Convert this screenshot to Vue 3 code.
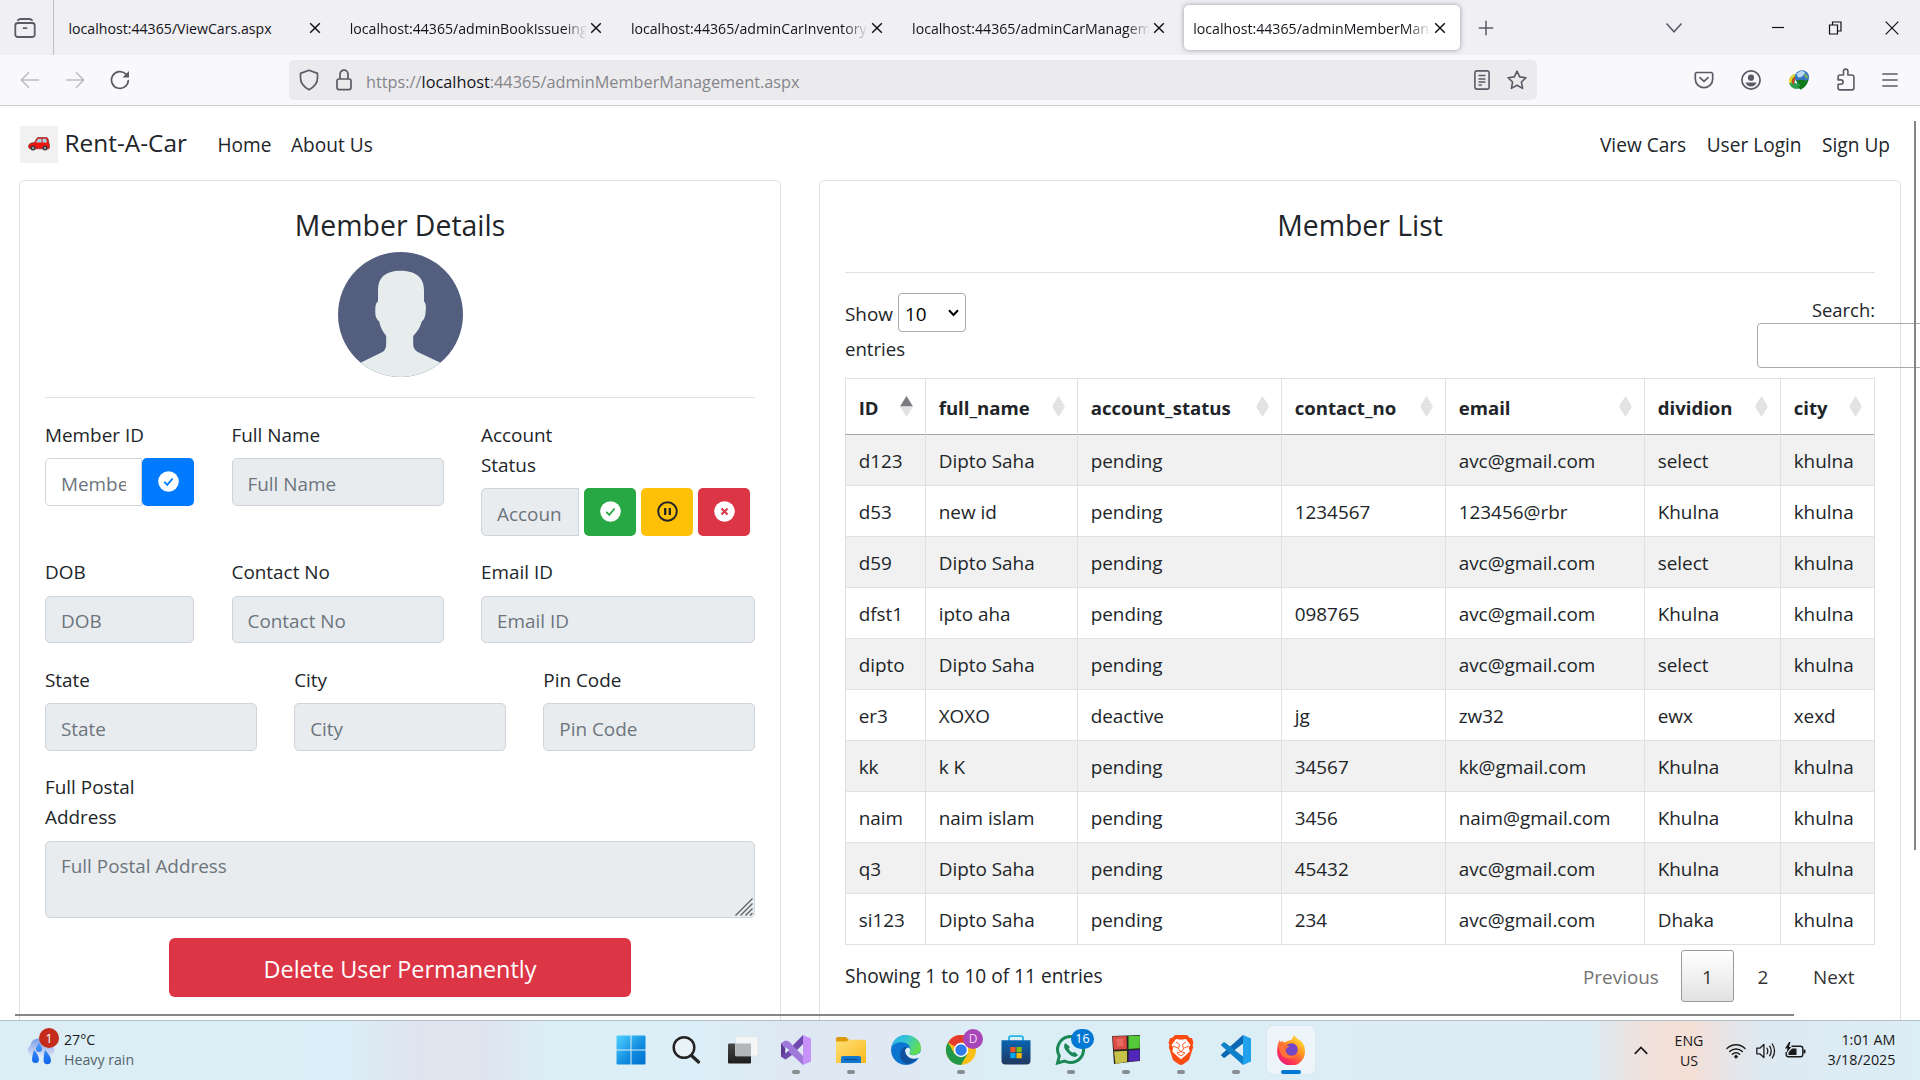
<script setup>
const tabs = [
  { title: 'localhost:44365/ViewCars.aspx' },
  { title: 'localhost:44365/adminBookIssueing.aspx' },
  { title: 'localhost:44365/adminCarInventory.aspx' },
  { title: 'localhost:44365/adminCarManagement.aspx' },
  { title: 'localhost:44365/adminMemberManagement.aspx', active: true },
]

const columns = [
  { label: 'ID', width: 80, sorted: true },
  { label: 'full_name', width: 152 },
  { label: 'account_status', width: 204 },
  { label: 'contact_no', width: 164 },
  { label: 'email', width: 199 },
  { label: 'dividion', width: 136 },
  { label: 'city', width: 94 },
]

const members = [
  ['d123', 'Dipto Saha', 'pending', '', 'avc@gmail.com', 'select', 'khulna'],
  ['d53', 'new id', 'pending', '1234567', '123456@rbr', 'Khulna', 'khulna'],
  ['d59', 'Dipto Saha', 'pending', '', 'avc@gmail.com', 'select', 'khulna'],
  ['dfst1', 'ipto aha', 'pending', '098765', 'avc@gmail.com', 'Khulna', 'khulna'],
  ['dipto', 'Dipto Saha', 'pending', '', 'avc@gmail.com', 'select', 'khulna'],
  ['er3', 'XOXO', 'deactive', 'jg', 'zw32', 'ewx', 'xexd'],
  ['kk', 'k K', 'pending', '34567', 'kk@gmail.com', 'Khulna', 'khulna'],
  ['naim', 'naim islam', 'pending', '3456', 'naim@gmail.com', 'Khulna', 'khulna'],
  ['q3', 'Dipto Saha', 'pending', '45432', 'avc@gmail.com', 'Khulna', 'khulna'],
  ['si123', 'Dipto Saha', 'pending', '234', 'avc@gmail.com', 'Dhaka', 'khulna'],
]
</script>

<template>
  <div class="screen">
    <!-- Tab strip -->
    <div class="tabstrip">
      <div class="recent">
        <svg width="22" height="20" viewBox="0 0 22 20" fill="none" stroke="#5b5b66" stroke-width="1.8" stroke-linecap="round">
          <path d="M4 2.200Q4.800 1 6.500 1h9q1.700 0 2.500 1.200" /><rect x="1.300" y="5" width="19.400" height="14" rx="2.400" /><path d="M9.500 10.200h3" />
        </svg>
      </div>
      <div v-for="tab in tabs" :key="tab.title" class="tab" :class="{ active: tab.active }">
        <span class="tab-title">{{ tab.title }}</span>
        <svg class="tab-close" width="12" height="12" viewBox="0 0 12 12" stroke="#15141a" stroke-width="1.5"><path d="M1.2 1.2l9.6 9.6M10.8 1.2l-9.6 9.6" /></svg>
      </div>
      <svg class="plus" width="16" height="16" viewBox="0 0 16 16" stroke="#5b5b66" stroke-width="1.5"><path d="M8 .8v14.4M.8 8h14.4" /></svg>
      <div class="window-controls">
        <svg width="18" height="12" viewBox="0 0 18 12" fill="none" stroke="#5b5b66" stroke-width="1.6"><path d="M1.5 1.5L9 9.7l7.5-8.2" /></svg>
        <svg width="14" height="14" viewBox="0 0 14 14" stroke="#111" stroke-width="1.2"><path d="M1 6.5h12" /></svg>
        <svg width="14" height="14" viewBox="0 0 14 14" fill="none" stroke="#111" stroke-width="1.2"><path d="M1.500 4h8v9h-8zM4.500 3.800V1h8.500v9H9.700" /></svg>
        <svg width="14" height="14" viewBox="0 0 14 14" stroke="#111" stroke-width="1.2"><path d="M.7.7l12.6 12.6M13.3.7L.7 13.3" /></svg>
      </div>
    </div>

    <!-- Toolbar -->
    <div class="toolbar">
      <div class="nav-buttons">
        <svg width="20" height="18" viewBox="0 0 20 18" fill="none" stroke="#bcbcc2" stroke-width="1.6" stroke-linecap="round" stroke-linejoin="round"><path d="M18.5 9H1.5M8.5 1.7L1.3 9l7.2 7.3" /></svg>
        <svg width="20" height="18" viewBox="0 0 20 18" fill="none" stroke="#bcbcc2" stroke-width="1.6" stroke-linecap="round" stroke-linejoin="round"><path d="M1.5 9h17M11.5 1.7L18.7 9l-7.2 7.3" /></svg>
        <svg width="20" height="20" viewBox="0 0 20 20" fill="none" stroke="#5b5b66" stroke-width="1.7" stroke-linecap="round"><path d="M18.3 10.5a8.4 8.4 0 1 1-2.6-6.6l1.6 1.5" /><path d="M19 1v6.5h-6.5z" fill="#5b5b66" stroke="none" /></svg>
      </div>
      <div class="urlbar">
        <svg class="shield" width="20" height="22" viewBox="0 0 20 22" fill="none" stroke="#5b5b66" stroke-width="1.7" stroke-linejoin="round"><path d="M10 1.2l8.5 3.2v4.4c0 5-3.5 9.300-8.500 11.900C5 18.100 1.500 13.800 1.500 8.800V4.400z" /></svg>
        <svg class="lock" width="16" height="22" viewBox="0 0 16 22" fill="none" stroke="#5b5b66" stroke-width="1.7"><rect x="1" y="10" width="14" height="10.6" rx="2" /><path d="M4 10V5.2a4 4 0 0 1 8 0V10" /></svg>
        <span class="url">https://<b>localhost</b>:44365/adminMemberManagement.aspx</span>
        <svg class="reader" width="16" height="20" viewBox="0 0 16 20" fill="none" stroke="#5b5b66" stroke-width="1.6" stroke-linecap="round"><rect x=".9" y=".9" width="14.2" height="18.2" rx="2.2" /><path d="M5 5.500h6M5 9h6M5 12h6M5 15h2.500" stroke-width="1.300" /></svg>
        <svg class="star" width="20" height="20" viewBox="0 0 20 20" fill="none" stroke="#5b5b66" stroke-width="1.6" stroke-linejoin="round"><path d="M10 1.200l2.700 5.700 6.300.8-4.600 4.300 1.200 6.400L10 15.300l-5.600 3.100L5.600 12 1 7.700l6.300-.8z" /></svg>
      </div>
      <div class="extensions">
        <svg width="20" height="18" viewBox="0 0 20 18" fill="none" stroke="#5b5b66" stroke-width="1.7" stroke-linecap="round" stroke-linejoin="round"><path d="M3 1.500h14a1.700 1.700 0 0 1 1.700 1.700v4.800a8.700 8.700 0 0 1-17.400 0V3.200A1.700 1.700 0 0 1 3 1.500z" /><path d="M6 6.600l4 3.800 4-3.800" /></svg>
        <svg width="20" height="20" viewBox="0 0 20 20"><circle cx="10" cy="10" r="9.1" fill="none" stroke="#5b5b66" stroke-width="1.7" /><circle cx="10" cy="7.700" r="3.100" fill="#5b5b66" /><path d="M4.500 12.500h11c-.8 2.400-3 4-5.500 4s-4.700-1.600-5.500-4z" fill="#5b5b66" /></svg>
        <svg width="22" height="20" viewBox="0 0 22 20">
          <circle cx="8.500" cy="11.500" r="7.500" fill="#2aa050" /><path d="M7 4.200a7.500 7.500 0 0 0-6 8.300l2.500 1c-.4-3.700.9-6 4-7.500z" fill="#f6d52a" /><path d="M9.500 5.500C5.500 7 4 9.500 4.200 13.500l1.700 1c-.2-3.800 1-5.800 4-6.800z" fill="#e23a25" /><path d="M10 7.500c-2.500 1-3.500 3-3.200 5.500l2 .5c0-2 .7-3 2.200-3.500z" fill="#fff" />
          <circle cx="14" cy="7.300" r="7" fill="#3475c4" /><path d="M8.500 5c1-3 4-4.300 6.500-3.800L17.500 3l-4 4-3 .5z" fill="#b9d9f2" /><path d="M16 3l3.500 2.500.5 3-3-1z" fill="#7fae5a" />
          <path d="M7.500 11c5-1.500 8-1.500 10-.2l3-1.200c-.8 4.400-3 7.700-8 10.200l-3-3.300 2.800-.7C11.300 13 9.500 12 7.500 11z" fill="#117a18" />
        </svg>
        <svg width="18" height="24" viewBox="0 0 18 24" fill="none" stroke="#5b5b66" stroke-width="1.6" stroke-linejoin="round"><path d="M6.500 7V3.300a2.200 2.200 0 0 1 4.400 0V7H15a1.900 1.900 0 0 1 1.900 1.900V20a1.900 1.900 0 0 1-1.900 1.900H3A1.900 1.900 0 0 1 1.100 20v-3.700h2.800a2.200 2.200 0 0 0 0-4.400H1.100V8.900A1.900 1.900 0 0 1 3 7z" /></svg>
        <svg width="16" height="16" viewBox="0 0 16 16" stroke="#5b5b66" stroke-width="1.500"><path d="M.3 2h15.400M.3 8h15.400M.3 14h15.400" /></svg>
      </div>
    </div>

    <!-- Web page -->
    <div class="page">
      <nav class="navbar">
        <div class="logo">
          <svg width="22" height="14" viewBox="0 0 22 14"><path d="M6.500 5.500L9 1.200Q9.300.6 10 .6h8Q19.700.6 20 2l1 4.500q.6 1 .4 4.500l-.8.8H2L.6 10.500Q.4 8.500 1.200 7.300 3 5.600 6.500 5.500z" fill="#ee1510" stroke="#762622" stroke-width=".7" /><path d="M8 5.500l2-3.700h3.600v3.700zM14.600 1.800h3.600l.8 3.700h-4.400z" fill="#9cd8e6" /><circle cx="5" cy="11" r="2.500" fill="#383840" /><circle cx="17" cy="11" r="2.500" fill="#383840" /><circle cx="5" cy="11" r="1" fill="#bbb" /><circle cx="17" cy="11" r="1" fill="#bbb" /></svg>
        </div>
        <span class="brand">Rent-A-Car</span>
        <a class="link home">Home</a>
        <a class="link about">About Us</a>
        <div class="right-links">
          <a class="link">View Cars</a>
          <a class="link">User Login</a>
          <a class="link">Sign Up</a>
        </div>
      </nav>

      <main class="content">
        <section class="card details">
          <h4>Member Details</h4>
          <svg class="avatar" width="125" height="125" viewBox="0 0 125 125">
            <defs><clipPath id="disc"><circle cx="62.5" cy="62.5" r="62.5" /></clipPath></defs>
            <g clip-path="url(#disc)">
              <rect width="125" height="125" fill="#545f80" />
              <path d="M40 49.500V38C40 25 48 18.700 62.500 18.700S86 25 86 38v11.500q2.500 2 1.700 9.500-.3 8-4 10.500C82 76 79 80 75.200 84v8q.2 5.500 4.500 8L102 110.500 125 125H0l23-14.500L44.500 100q3.700-2.300 3.700-8v-8C45 80 42 75 41.300 69.500 37 66 37.300 62 37.300 57.500q0-6.500 2.700-8z" fill="#e6edec" />
            </g>
          </svg>
          <hr />
          <div class="row row-a">
            <div class="group">
              <label>Member ID</label>
              <div class="input-group">
                <div class="input open joined"><span>Member ID</span></div>
                <button class="btn blue"><svg width="21" height="21" viewBox="0 0 21 21"><circle cx="10.5" cy="10.5" r="10.3" fill="#fff" /><path d="M6.300 10.800l3 3 5.300-6.300" fill="none" stroke="#007bff" stroke-width="1.8" /></svg></button>
              </div>
            </div>
            <div class="group">
              <label>Full Name</label>
              <div class="input"><span>Full Name</span></div>
            </div>
            <div class="group">
              <label class="two-line">Account<br />Status</label>
              <div class="input-group status">
                <div class="input joined"><span>Account Status</span></div>
                <button class="btn green"><svg width="21" height="21" viewBox="0 0 21 21"><circle cx="10.5" cy="10.5" r="10.3" fill="#fff" /><path d="M6.300 10.800l3 3 5.300-6.300" fill="none" stroke="#28a745" stroke-width="1.8" /></svg></button>
                <button class="btn yellow"><svg width="21" height="21" viewBox="0 0 21 21"><circle cx="10.5" cy="10.5" r="9.3" fill="none" stroke="#212529" stroke-width="2" /><path d="M8.200 6.900v7.200M12.800 6.900v7.200" stroke="#212529" stroke-width="2.3" /></svg></button>
                <button class="btn red"><svg width="21" height="21" viewBox="0 0 21 21"><circle cx="10.5" cy="10.5" r="10.3" fill="#fff" /><path d="M7.500 7.500l6 6M13.500 7.500l-6 6" stroke="#dc3545" stroke-width="2" /></svg></button>
              </div>
            </div>
          </div>
          <div class="row row-a">
            <div class="group"><label>DOB</label><div class="input"><span>DOB</span></div></div>
            <div class="group"><label>Contact No</label><div class="input"><span>Contact No</span></div></div>
            <div class="group"><label>Email ID</label><div class="input"><span>Email ID</span></div></div>
          </div>
          <div class="row row-b">
            <div class="group"><label>State</label><div class="input"><span>State</span></div></div>
            <div class="group"><label>City</label><div class="input"><span>City</span></div></div>
            <div class="group"><label>Pin Code</label><div class="input"><span>Pin Code</span></div></div>
          </div>
          <div class="group">
            <label class="two-line">Full Postal<br />Address</label>
            <div class="input area">
              <span>Full Postal Address</span>
              <svg class="grip" width="18" height="18" viewBox="0 0 18 18" stroke="#606468" stroke-width="1.4"><path d="M.5 17.500l17-17M5.500 17.500l12-12M10.500 17.500l7-7M15 17.500l2.500-2.500" /></svg>
            </div>
          </div>
          <button class="delete">Delete User Permanently</button>
        </section>

        <section class="card list">
          <h4>Member List</h4>
          <hr />
          <div class="controls">
            <div class="length">
              <div class="length-line">Show
                <span class="select">10<svg width="11" height="8" viewBox="0 0 11 8" fill="none" stroke="#000" stroke-width="2"><path d="M1 1.300l4.500 4.700L10 1.300" /></svg></span>
              </div>
              <div class="entries">entries</div>
            </div>
            <div class="search">
              <span>Search:</span>
              <div class="search-input"></div>
            </div>
          </div>
          <table>
            <colgroup><col v-for="c in columns" :key="c.label" :style="{ width: c.width + 'px' }" /></colgroup>
            <thead>
              <tr>
                <th v-for="c in columns" :key="c.label">
                  <div class="th">
                    <span>{{ c.label }}</span>
                    <svg width="13" height="21" viewBox="0 0 13 21"><path d="M6.500 0L13 10.500H0z" :fill="c.sorted ? '#7a7a80' : '#e2e2e3'" /><path d="M0 10.500h13L6.500 21z" fill="#e2e2e3" /></svg>
                  </div>
                </th>
              </tr>
            </thead>
            <tbody>
              <tr v-for="m in members" :key="m[0]">
                <td v-for="(value, i) in m" :key="i">{{ value }}</td>
              </tr>
            </tbody>
          </table>
          <div class="table-footer">
            <span class="info">Showing 1 to 10 of 11 entries</span>
            <span class="page-btn disabled prev">Previous</span>
            <span class="page-btn current">1</span>
            <span class="page-btn two">2</span>
            <span class="page-btn next">Next</span>
          </div>
        </section>
      </main>
      <div class="scroll-y"></div>
      <div class="scroll-x"></div>
    </div>

    <!-- Taskbar -->
    <footer class="taskbar">
      <div class="weather">
        <div class="weather-icon">
          <svg width="30" height="28" viewBox="0 0 30 28">
            <defs>
              <linearGradient id="cloud" x1="0" y1="0" x2="0" y2="1"><stop offset="0" stop-color="#7c9fe8" /><stop offset=".6" stop-color="#b4c5ee" /><stop offset="1" stop-color="#dde4f5" /></linearGradient>
              <linearGradient id="drop" x1="0" y1="0" x2="0" y2="1"><stop offset="0" stop-color="#4b9cff" /><stop offset="1" stop-color="#0f63e8" /></linearGradient>
            </defs>
            <path d="M6.500 19A6 6 0 0 1 5.500 8.500C6 4 9.500 1.500 14 1.500c4.500 0 8 2.500 8.700 6.500 4 .3 6.800 2.500 6.800 5.500S26.500 19 23 19z" fill="url(#cloud)" />
            <path d="M14 6q3.500 4 3 6.500t-3 2.500-3-2.500T14 6zM9 13q5 5.500 5 9.500a3.500 3.500 0 0 1-7 0Q7.200 18 9 13zM20 13q6 6 6 10.500a3.700 3.700 0 0 1-7.400 0Q18.500 18 20 13z" fill="url(#drop)" />
          </svg>
          <span class="badge alert">1</span>
        </div>
        <div class="weather-text"><div>27°C</div><div class="muted">Heavy rain</div></div>
      </div>

      <div class="apps">
        <div class="app">
          <svg width="30" height="30" viewBox="0 0 30 30"><defs><linearGradient id="win" x1="0" y1="0" x2="1" y2="1"><stop offset="0" stop-color="#4fd3ff" /><stop offset=".6" stop-color="#0f8ade" /><stop offset="1" stop-color="#0070cf" /></linearGradient></defs><path d="M.5 1.500a1 1 0 0 1 1-1H14.500v14H.5zM15.500.5h13a1 1 0 0 1 1 1v13h-14zM.5 15.500h14v14h-13a1 1 0 0 1-1-1zM15.500 15.500h14v13a1 1 0 0 1-1 1h-13z" fill="url(#win)" /></svg>
        </div>
        <div class="app">
          <svg width="30" height="30" viewBox="0 0 30 30" fill="none" stroke="#242424"><circle cx="13" cy="12.500" r="10.300" stroke-width="2.500" fill="#e9f2f7" /><path d="M20.500 20.500l7 6.500" stroke-width="3.200" stroke-linecap="round" /></svg>
        </div>
        <div class="app task-view">
          <svg width="32" height="30" viewBox="0 0 32 30"><defs><linearGradient id="tv" x1="0" y1="0" x2="0" y2="1"><stop offset="0" stop-color="#484848" /><stop offset="1" stop-color="#1c1c1c" /></linearGradient></defs><rect x="1" y="8.500" width="23" height="20" rx="1" fill="url(#tv)" /><rect x="8.500" y="1.500" width="22.500" height="19.500" rx="1" fill="#f3f5f6" stroke="#dcdfe0" stroke-width=".6" /><path d="M8.500 8.500H24V21H8.500z" fill="#b4b6b8" /></svg>
        </div>
        <div class="app">
          <svg width="30" height="30" viewBox="0 0 30 30"><path d="M0 8.500l4.500-2.800V24L0 21.500z" fill="#5c3b93" /><path d="M0 21.500L4.500 24.500 11 20 22 9V0L4.800 17.500z" fill="#7049ae" /><path d="M0 8.500l4.500-3 3.500 1L22 21v9L4.500 14z" fill="#a078da" /><path d="M4.500 12v6.500L8 15z" fill="#dceef6" /><path d="M22 0l8 3.500v23L22 30z" fill="#c692fa" /></svg>
          <i></i>
        </div>
        <div class="app">
          <svg width="30" height="28" viewBox="0 0 30 28"><defs><linearGradient id="fold" x1="0" y1="0" x2="1" y2="1"><stop offset="0" stop-color="#ffe07a" /><stop offset="1" stop-color="#f9b81a" /></linearGradient></defs><path d="M0 2.500Q0 1 1.500 1H10l3 3-2 3H0z" fill="#dc9b0d" /><path d="M0 5.500h10.500L13 3.700h15.500q1.500 0 1.500 1.500V27H0z" fill="url(#fold)" /><path d="M5 27v-5q0-2 2-2h16q2 0 2 2v5z" fill="#1279cf" /><path d="M8.500 23.500h13" stroke="#0a4c94" stroke-width="1.200" /></svg>
          <i></i>
        </div>
        <div class="app">
          <svg width="30" height="30" viewBox="0 0 30 30"><defs><linearGradient id="edge" x1="0" y1="0" x2="1" y2=".4"><stop offset="0" stop-color="#27b2ee" /><stop offset=".5" stop-color="#35c5d2" /><stop offset="1" stop-color="#61dd54" /></linearGradient></defs><path d="M15 0A15 15 0 1 0 28 22.500L30 13z" fill="#0b74d1" /><path d="M.5 12C2 4 8.500 0 15 0c8 0 15 5.500 15 13 0 4.500-3.500 7-7.500 7-3 0-5-1-4-2.800 3-5.200-2-10-8-10C5.500 7.200 2 9.500.5 12z" fill="url(#edge)" /><path d="M9.500 17c1.200-4.500 4.500-5.500 7-4.700-3.500 2-3 9 5 9 2.500 0 4.500-.6 6-1.500C26 25 21 29 15.500 29c-5-1.500-7.500-7-6-12z" fill="#11509c" /><path d="M14 15.500q1-3 4-3c1.500 1.500 1.300 3.500.5 5q-.8 2.500 3.500 2.700 3.500.2 7.500-2.700l1 2.500-2 3q-.5-.8-1.500 0-2 1-5 .8-7-1-8-8.300z" fill="#e0eff7" /></svg>
        </div>
        <div class="app">
          <svg width="30" height="30" viewBox="0 0 30 30"><circle cx="15" cy="15" r="15" fill="#fbc016" /><path d="M15 15L2 7.500A15 15 0 0 1 28 7.500H15z" fill="#e53b2e" /><path d="M2 7.500A15 15 0 0 0 15 30l6.500-11.200L8.500 18.800z" fill="#229849" /><circle cx="15" cy="15" r="7.200" fill="#fff" /><circle cx="15" cy="15" r="5.700" fill="#2e7bea" /></svg>
          <span class="badge profile">D</span><i></i>
        </div>
        <div class="app">
          <svg width="30" height="30" viewBox="0 0 30 30"><defs><linearGradient id="store" x1="0" y1="0" x2="0" y2="1"><stop offset="0" stop-color="#0a65b2" /><stop offset="1" stop-color="#20375f" /></linearGradient></defs><path d="M8 6V3q0-1.800 1.800-1.800h10.400Q22 1.200 22 3v3" fill="none" stroke="#22b6e8" stroke-width="1.800" /><path d="M.5 5.300h29v20.200q0 4-4 4h-21q-4 0-4-4z" fill="url(#store)" /><path d="M9.300 12h5.200v5.200H9.300z" fill="#f35325" /><path d="M15.500 12h5.200v5.200h-5.200z" fill="#81bc06" /><path d="M9.300 18h5.200v5.200H9.300z" fill="#05a6f0" /><path d="M15.500 18h5.200v5.200h-5.200z" fill="#ffba08" /></svg>
        </div>
        <div class="app">
          <svg width="32" height="30" viewBox="0 0 32 30" fill="none" stroke="#1b8755"><path d="M2.500 28l1.800-7A13 13 0 1 1 9.500 26z" stroke-width="3" /><path d="M10.500 9c-1.500 2 0 5.500 3 8.500s6.500 4.500 8.500 2.700l-2.500-2.500-2 1q-3.500-2-4.800-5l1.300-1.700z" fill="#1b8755" stroke-width="1.500" stroke-linejoin="round" /></svg>
          <span class="badge unread">16</span><i></i>
        </div>
        <div class="app">
          <svg width="30" height="30" viewBox="0 0 30 30"><path d="M1 1l28-1v26l-11 1-15 2z" fill="#272521" /><path d="M1.500 1.500l14-.5.3 13-13 .8z" fill="#dd4b45" /><path d="M17.500 1L29 .7l-.3 12.600-11.200.7z" fill="#55c83a" /><path d="M3 16.500l13-.7v11L4.500 29z" fill="#c6c148" /><path d="M17.700 15.500l11-.8v10.800l-11 1.200z" fill="#5127bb" /><path d="M5 4l7-.5.5 7.500-6 .5z" fill="#ee7d74" opacity=".6" /></svg>
          <i></i>
        </div>
        <div class="app">
          <svg width="26" height="30" viewBox="0 0 26 30"><path d="M7 0h12l3 3h2l1.500 5-1 2 .7 2-4 12.500q-.5 1-4.200 3.500-2.500 2-4 2t-4-2Q5.500 25.500 4.800 24.500L.8 12l.7-2-1-2L2 3h2z" fill="#fa4b12" /><path d="M8 4l5 .8L18 4l4.500 6-1.800 2.500 1 4-5 4.800-3.700 3-3.700-3-5-4.800 1-4L3.500 10z" fill="#fff" /><path d="M8 7l3.500 2.500L10.500 14l2.500 3 2.500-3-1-4.500L18 7M5 11l5 2M21 11l-5 2M9 18l4-1.500L17 18l-4 3z" fill="none" stroke="#fa4b12" stroke-width=".9" /></svg>
          <i></i>
        </div>
        <div class="app">
          <svg width="30" height="30" viewBox="0 0 30 30"><path d="M22 0l8 3.500v23L22 30z" fill="#22a2ed" /><path d="M22 0v8.500L4 22.500q-.8.700-1.700 0L.5 20.800q-.8-.8 0-1.600z" fill="#0a67b2" /><path d="M22 30v-8.500L4 7.500q-.8-.7-1.700 0L.5 9.200q-.8.800 0 1.600z" fill="#0f81cb" /></svg>
          <i></i>
        </div>
        <div class="app current-app">
          <svg width="30" height="30" viewBox="0 0 30 30"><defs><linearGradient id="fox" x1=".9" y1="0" x2=".2" y2="1"><stop offset="0" stop-color="#fff044" /><stop offset=".4" stop-color="#ff9a20" /><stop offset=".75" stop-color="#ff3750" /><stop offset="1" stop-color="#e31587" /></linearGradient></defs><path d="M15.500 5L18 0q2 3.500 6 5.500l1 .5q4 4 4 10.500A13.800 13.800 0 0 1 1.200 17Q.5 10 4 4.500V7.500L5.500 5.700l2.700 1.800q4-2.500 7.300-2.500z" fill="url(#fox)" /><circle cx="15.500" cy="14.500" r="6.300" fill="#7547c6" /><path d="M2 10q5-2 8 .5l3.500.8-3.800 2.700q-.7 4 3.800 6.500 5 1 8-1-2 4-8 4T5 19z" fill="#ff7136" /></svg>
          <i></i>
        </div>
      </div>

      <div class="tray">
        <svg class="chev" width="14" height="9" viewBox="0 0 14 9" fill="none" stroke="#1a1a1a" stroke-width="1.7"><path d="M.8 7.800L7 1.500l6.200 6.300" /></svg>
        <div class="lang"><div>ENG</div><div>US</div></div>
        <svg class="wifi" width="20" height="16" viewBox="0 0 20 16" fill="none" stroke="#1a1a1a" stroke-width="1.4" stroke-linecap="round"><path d="M1 5.500a12.600 12.600 0 0 1 18 0M3.700 8.500a9 9 0 0 1 12.600 0M6.400 11.300a5 5 0 0 1 7.200 0" /><circle cx="10" cy="13.700" r="1.300" fill="#1a1a1a" stroke-width="1" /></svg>
        <svg class="sound" width="20" height="18" viewBox="0 0 20 18" fill="none" stroke="#1a1a1a" stroke-width="1.300" stroke-linecap="round" stroke-linejoin="round"><path d="M.8 6.200h3L7.900 2.500v13l-4.100-3.700h-3zM11 6.200q1.600 2.800 0 5.600M13.700 4.200q3 4.800 0 9.600M16.300 2q4.500 7 0 14" /></svg>
        <svg class="battery" width="21" height="18" viewBox="0 0 21 18"><path d="M6.500 4.200h9q2.300 0 2.300 2.300v6q0 2.300-2.300 2.300h-12q-2.300 0-2.300-2.300V10" fill="none" stroke="#1a1a1a" stroke-width="1.400" /><path d="M18.500 7.500h1q1 0 1 1v2q0 1-1 1h-1zM7 6.500h4.500V13h-8v-2.500z" fill="#1a1a1a" /><path d="M4 0L0 6.500h2.500L1.500 11l4.800-6H4L5.500 0z" fill="#1a1a1a" /></svg>
        <div class="clock"><div>1:01 AM</div><div>3/18/2025</div></div>
      </div>
    </footer>
  </div>
</template>

<style>
body {
  margin: 0;
  overflow: hidden;
}
</style>

<style scoped>
.screen {
  width: 1920px;
  height: 1080px;
  overflow: hidden;
  display: flex;
  flex-direction: column;
  background: #fff;
  color: #212529;
  font-family: "Open Sans", "Noto Sans", sans-serif;
  font-size: 18.9px;
}
.screen * { box-sizing: border-box; }
svg { display: block; flex: none; }

/* tab strip */
.tabstrip { height: 55px; flex: none; display: flex; align-items: center; background: #f0eff4; color: #15141a; }
.recent { width: 54px; height: 55px; flex: none; display: flex; align-items: center; justify-content: center; border-right: 1px solid #bfbfc6; padding: 1px 3px 0 0; }
.tab { width: 276px; height: 45px; margin-right: 5.2px; padding: 2px 14px 0 9.5px; display: flex; align-items: center; gap: 3px; border-radius: 5px; flex: none; font-size: 14.15px; }
.tab:nth-child(2) { margin-left: 5px; }
.tab.active { background: #fff; box-shadow: 0 0 5px rgba(80, 80, 90, .55); }
.tab-title { flex: 1; min-width: 0; overflow: hidden; white-space: nowrap; -webkit-mask-image: linear-gradient(to right, #000 90%, transparent); mask-image: linear-gradient(to right, #000 90%, transparent); }
.tab:nth-child(2) .tab-title { -webkit-mask-image: none; mask-image: none; }
.tab-close { margin-top: -2px; }
.plus { margin-left: 13.5px; margin-top: 1px; }
.window-controls { margin-left: auto; display: flex; align-items: center; margin-right: 21px; }
.window-controls svg:nth-child(2) { margin-left: 88px; }
.window-controls svg:nth-child(3), .window-controls svg:nth-child(4) { margin-left: 43px; }

/* toolbar */
.toolbar { height: 51px; flex: none; display: flex; align-items: flex-start; background: #f9f9fb; border-bottom: 1px solid #ccccd0; padding-top: 5px; }
.nav-buttons { width: 289px; height: 40px; flex: none; padding-left: 20px; display: flex; align-items: center; gap: 25px; }
.urlbar { width: 1248px; height: 40px; flex: none; background: #ebebed; border-radius: 5px; display: flex; align-items: center; padding-left: 10px; }
.lock { margin-left: 17px; }
.url { margin-left: 14px; padding-top: 4px; color: #85858b; font-size: 16.3px; white-space: nowrap; width: 1108px; }
.url b { font-weight: 400; color: #15141a; }
.star { margin-left: 17px; }
.extensions { flex: 1; height: 40px; display: flex; align-items: center; justify-content: flex-end; gap: 27px; padding-right: 22px; }

/* page */
.page { position: relative; height: 914px; flex: none; overflow: hidden; display: flex; flex-direction: column; }
.navbar { height: 74px; flex: none; display: flex; align-items: center; padding: 2px 30px 0 20px; line-height: 30px; }
.logo { width: 38px; height: 37px; background: #f1f1f1; display: flex; align-items: center; justify-content: center; }
.brand { width: 153px; margin-left: 6.5px; font-size: 24.4px; padding-bottom: 2px; white-space: nowrap; }
.link { white-space: nowrap; padding-top: 1px; font-size: 19.1px; }
.home { width: 73.5px; }
.right-links { margin-left: auto; display: flex; gap: 20.5px; }

.content { flex: 1; display: flex; padding: 0 19px; gap: 38px; align-items: flex-start; }
.card { height: 900px; border: 1px solid #dfdfdf; border-radius: 5px; padding: 25px; }
.details { width: 762px; flex: none; display: flex; flex-direction: column; }
.list { width: 1082px; flex: none; display: flex; flex-direction: column; }
h4 { margin: 0 0 10px; font-size: 28.4px; font-weight: 400; line-height: 36px; height: 36px; text-align: center; padding-top: 1px; }
hr { width: 100%; height: 1px; flex: none; border: 0; background: #e0e0e1; margin: 20px 0; }
.avatar { align-self: center; }

.row { display: grid; column-gap: 37.5px; align-items: start; }
.row-a { grid-template-columns: 149px 212px 1fr; }
.row-b { grid-template-columns: 1fr 1fr 1fr; }
.group { margin-bottom: 20px; }
label { display: block; line-height: 30px; height: 30px; margin-bottom: 10px; padding-top: 1.5px; }
label.two-line { height: 60px; }
.input { height: 47.5px; border: 1px solid #ced4da; border-radius: 5px; background: #e9ecef; color: #6c757d; padding: 1.5px 15px 0; line-height: 46px; white-space: nowrap; overflow: hidden; }
.input span { display: block; overflow: hidden; }
.input.open { background: #fff; }
.input.joined { border-radius: 5px 0 0 5px; width: 97px; }
.input.area { position: relative; height: 77.5px; padding: 8px 15px; line-height: 32px; }
.grip { position: absolute; right: 1px; bottom: 1px; }
.input-group { display: flex; }
.status { gap: 5px; }
.status .joined { width: 98px; }
.status .joined span { width: 65px; }
.btn { width: 52px; height: 47.5px; border: 0; border-radius: 5px; padding: 0; display: flex; align-items: center; justify-content: center; }
.blue { background: #007bff; }
.green { background: #28a745; }
.yellow { background: #ffc107; }
.red { background: #dc3545; }
.delete { width: 462px; height: 59px; flex: none; align-self: center; border: 0; border-radius: 6px; background: #dc3545; color: #fff; font: inherit; font-size: 23.4px; padding: 3px 0 0; }

.controls { height: 85px; flex: none; display: flex; justify-content: space-between; }
.length-line { height: 39px; display: flex; align-items: center; gap: 5px; padding-top: 2px; }
.select { width: 68px; height: 39px; margin-top: -2px; border: 1px solid #aaa; border-radius: 4px; color: #000; display: flex; align-items: center; justify-content: space-between; padding: 2px 6px 0 6px; }
.select svg { margin-top: -2px; }
.entries { line-height: 30px; padding-top: 2px; font-size: 18.6px; }
.search { width: 118px; text-align: right; line-height: 30px; }
.search span { display: block; padding-top: 2px; height: 30px; font-size: 18.4px; }
.search-input { width: 250px; height: 45px; border: 1px solid #aaa; border-radius: 4px; }

table { width: 1030px; table-layout: fixed; border-collapse: separate; border-spacing: 0; border-right: 1px solid #dee2e6; flex: none; }
th, td { padding: 1px 0 0 12.7px; border-left: 1px solid #dee2e6; border-bottom: 1px solid #dee2e6; text-align: left; white-space: nowrap; line-height: 30px; }
th { height: 57px; border-top: 1px solid #dee2e6; border-bottom-color: #a5a6a8; font-size: 18.6px; }
td { height: 51px; }
tbody tr:nth-child(odd) td { background: #f1f1f1; }
.th { display: flex; justify-content: space-between; align-items: center; padding-right: 12.5px; }
.th span { padding-top: 1px; }
.th svg { margin-top: -1px; }
.table-footer { display: flex; align-items: center; height: 52px; margin-top: 5px; padding-top: 2px; white-space: nowrap; }
.info { width: 738px; font-size: 19.1px; padding-bottom: 2px; }
.prev { width: 98px; }
.page-btn { color: #333; }
.page-btn.disabled { color: #737373; }
.page-btn.current { width: 53px; height: 52px; margin-top: -2px; padding-top: 2px; line-height: 48px; text-align: center; border: 1px solid #999; border-radius: 3px; background: linear-gradient(#fff, #e2e2e2); }
.two { margin-left: 23.5px; width: 55.5px; }

.scroll-y { position: absolute; left: 1914px; top: 15px; width: 2px; height: 729px; background: #858585; }
.scroll-x { position: absolute; left: 15px; top: 908px; width: 1779px; height: 2px; background: #858585; }

/* taskbar */
.taskbar { height: 60px; flex: none; display: flex; align-items: stretch; border-top: 1px solid #b2bfc6; font-size: 14.2px; line-height: 20px; color: #1a1a1a;
  background: linear-gradient(90deg, #dbeef6 0, #dbedf6 350px, #dfe4ef 420px, #dfe4ef 480px, #dbeef6 550px, #dceef7 700px, #dee8f3 790px, #dfe8f3 900px, #dbeef6 1000px, #dcecf5 1590px, #efe1dc 1640px, #f4dfd5 1690px, #e9e3e3 1720px, #dee9f2 1760px, #dbedf6 1920px); }
.weather { width: 603.5px; flex: none; display: flex; align-items: center; padding-left: 25px; }
.weather-icon { position: relative; width: 30px; margin-right: 9px; }
.weather-text { padding-bottom: 2px; }
.muted { color: #55636b; }
.badge { position: absolute; display: flex; align-items: center; justify-content: center; border-radius: 50%; color: #fff; }
.alert { width: 20px; height: 20px; left: 14px; top: -9px; background: #c42b1c; font-size: 13px; }
.apps { width: 715px; flex: none; display: flex; padding-top: 5px; }
.app { position: relative; width: 48px; height: 48px; margin: 0 3.5px; display: flex; align-items: center; justify-content: center; border-radius: 5px; }
.task-view { padding-left: 3px; }
.app i { position: absolute; bottom: 0; left: 20px; width: 8px; height: 4px; border-radius: 2px; background: #878d91; }
.current-app { background: #edf5fa; box-shadow: 0 0 1px #b5c6d0; }
.current-app i { left: 14px; width: 20px; background: #0078d4; }
.profile { width: 20px; height: 20px; left: 26px; top: 3px; background: #a846b9; color: #f0d5f4; font-size: 12px; }
.unread { width: 23px; height: 20px; left: 24px; top: 3px; border-radius: 10px; background: #0078d4; font-size: 12.5px; }
.tray { flex: 1; display: flex; align-items: center; justify-content: flex-end; padding-right: 24.5px; }
.lang { width: 40px; text-align: center; margin-left: 21px; }
.wifi { margin-left: 17px; }
.sound { margin-left: 10px; }
.battery { margin-left: 9px; }
.clock { width: 89.5px; text-align: right; font-size: 14.35px; padding-bottom: 2px; }
</style>
